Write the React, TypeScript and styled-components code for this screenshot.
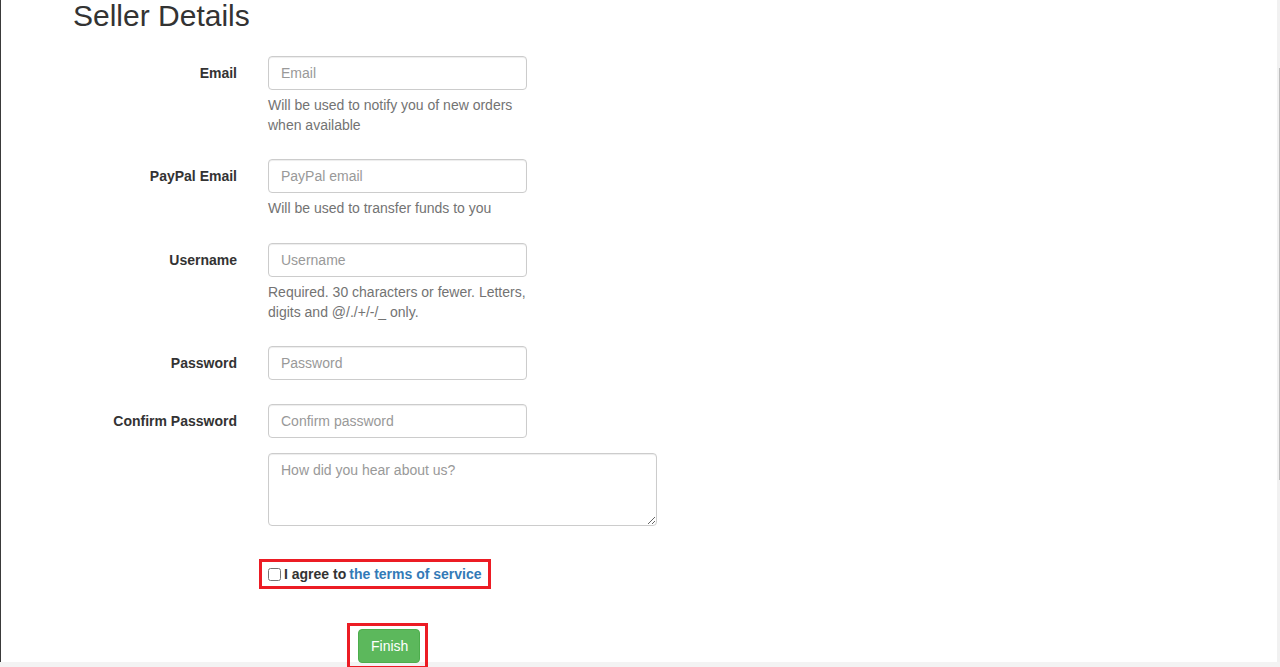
import styled, { createGlobalStyle } from "styled-components";

const GlobalStyle = createGlobalStyle`
  html, body {
    margin: 0;
    padding: 0;
    overflow: hidden;
  }
  body {
    font-family: "Liberation Sans", Arial, sans-serif;
    font-size: 14px;
    line-height: 1.42857;
    color: #333;
  }
  * {
    box-sizing: border-box;
  }
`;

const Frame = styled.div`
  display: flex;
  width: 1280px;
  height: 667px;
  overflow: hidden;
  background: linear-gradient(to bottom, #fff 0, #fff 662px, #f3f3f3 662px);
`;

const LeftRule = styled.div`
  width: 1px;
  height: 662px;
  background: #3a3a3a;
  flex-shrink: 0;
`;

const Main = styled.main`
  flex: 1;
  padding-left: 72px;
`;

const ScrollTrack = styled.div`
  width: 3px;
  height: 662px;
  flex-shrink: 0;
  background: #f1f1f1;
  padding-top: 68px;
`;

const ScrollThumb = styled.div`
  width: 1px;
  height: 412px;
  margin-left: 2px;
  background: #bdbdbd;
`;

const Title = styled.h2`
  margin: -1px 0 0;
  font-size: 30px;
  line-height: 33px;
  font-weight: 500;
  color: #333;
`;

const Form = styled.form`
  display: grid;
  grid-template-columns: 164px 1fr;
  column-gap: 31px;
  margin-top: 24px;
`;

const Label = styled.label`
  padding-top: 7px;
  text-align: right;
  font-weight: 700;
  line-height: 20px;
`;

const Field = styled.div<{ $gap: number }>`
  display: flex;
  flex-direction: column;
  align-items: flex-start;
  margin-bottom: ${(p) => p.$gap}px;
`;

const Input = styled.input`
  display: block;
  width: 259px;
  height: 34px;
  padding: 6px 12px;
  font-family: inherit;
  font-size: 14px;
  line-height: 20px;
  color: #555;
  background: #fff;
  border: 1px solid #ccc;
  border-radius: 4px;
  box-shadow: inset 0 1px 1px rgba(0, 0, 0, 0.075);
  outline: none;
  &::placeholder {
    color: #999;
  }
`;

const TextArea = styled.textarea`
  display: block;
  width: 389px;
  height: 73px;
  padding: 6px 12px;
  font-family: inherit;
  font-size: 14px;
  line-height: 20px;
  color: #555;
  border: 1px solid #ccc;
  border-radius: 4px;
  box-shadow: inset 0 1px 1px rgba(0, 0, 0, 0.075);
  resize: vertical;
  outline: none;
  &::placeholder {
    color: #999;
  }
`;

const Help = styled.span`
  display: block;
  width: 259px;
  margin-top: 5px;
  color: #737373;
  line-height: 20px;
`;

const Marked = styled.div<{ $pad: string; $offset: number }>`
  display: inline-flex;
  align-items: center;
  padding: ${(p) => p.$pad};
  margin-left: ${(p) => p.$offset}px;
  border: 3px solid #ec1c24;
`;

const AgreeLabel = styled.label`
  display: flex;
  align-items: center;
  font-weight: 700;
  line-height: 20px;
  input {
    width: 13px;
    height: 13px;
    margin: 0 3px 0 0;
  }
`;

const Link = styled.a`
  color: #337ab7;
  text-decoration: none;
  margin-left: 3px;
`;

const Button = styled.button`
  height: 34px;
  padding: 6px 11px 6px 12px;
  font-family: inherit;
  font-size: 14px;
  line-height: 20px;
  color: #fff;
  background: #5cb85c;
  border: 1px solid #4cae4c;
  border-radius: 4px;
`;

const Spacer = styled.div``;

const fields = [
  { label: "Email", placeholder: "Email", type: "email", help: "Will be used to notify you of new orders when available", gap: 24 },
  { label: "PayPal Email", placeholder: "PayPal email", type: "email", help: "Will be used to transfer funds to you", gap: 25 },
  { label: "Username", placeholder: "Username", type: "text", help: "Required. 30 characters or fewer. Letters, digits and @/./+/-/_ only.", gap: 24 },
  { label: "Password", placeholder: "Password", type: "password", gap: 24 },
  { label: "Confirm Password", placeholder: "Confirm password", type: "password", gap: 15 },
];

export default function App() {
  return (
    <>
      <GlobalStyle />
      <Frame>
        <LeftRule />
        <Main>
          <Title>Seller Details</Title>
          <Form onSubmit={(e) => e.preventDefault()}>
            {fields.map((f) => [
              <Label key={f.label + "-l"}>{f.label}</Label>,
              <Field key={f.label + "-f"} $gap={f.gap}>
                <Input type={f.type} placeholder={f.placeholder} />
                {f.help && <Help>{f.help}</Help>}
              </Field>,
            ])}
            <Spacer />
            <Field $gap={33}>
              <TextArea placeholder="How did you hear about us?" />
            </Field>
            <Spacer />
            <Field $gap={34}>
              <Marked $pad="2px 6px" $offset={-9}>
                <AgreeLabel>
                  <input type="checkbox" />
                  I agree to
                  <Link href="#">the terms of service</Link>
                </AgreeLabel>
              </Marked>
            </Field>
            <Spacer />
            <Field $gap={0}>
              <Marked $pad="3px 5px 3px 8px" $offset={79}>
                <Button type="submit">Finish</Button>
              </Marked>
            </Field>
          </Form>
        </Main>
        <ScrollTrack>
          <ScrollThumb />
        </ScrollTrack>
      </Frame>
    </>
  );
}
